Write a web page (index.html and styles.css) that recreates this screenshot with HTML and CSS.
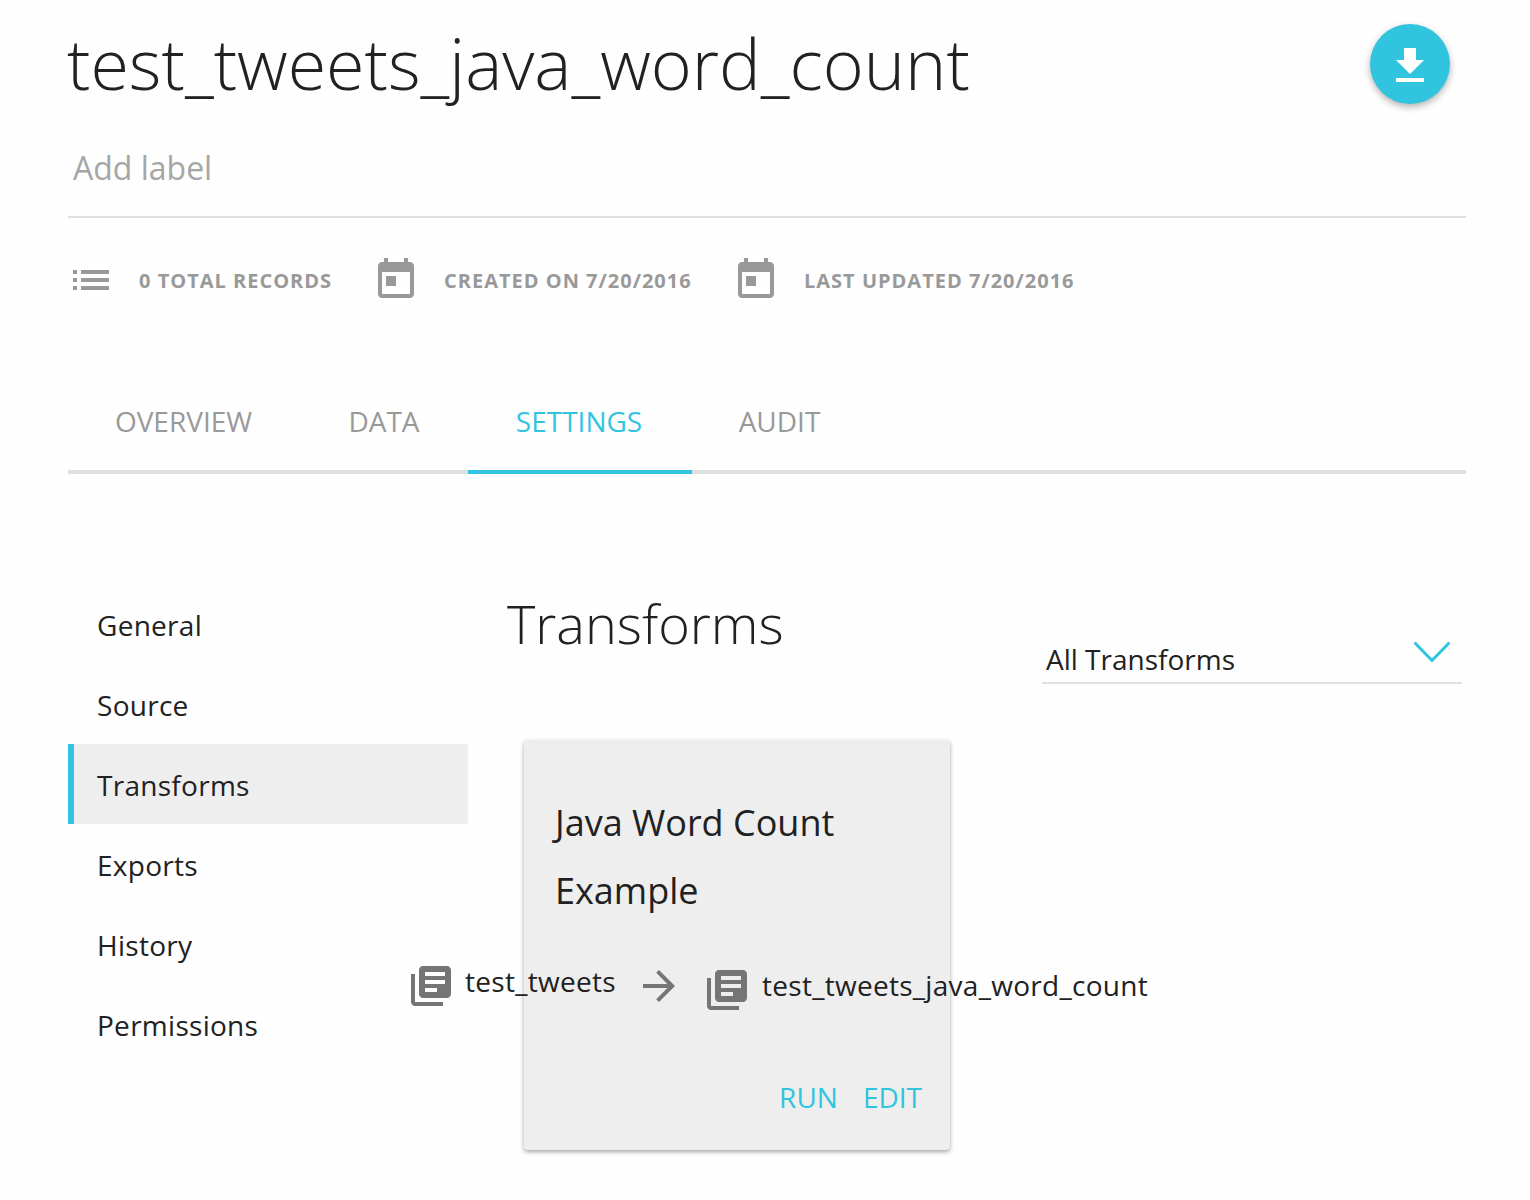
FILE: index.html
```html
<!DOCTYPE html>
<html lang="en">
<head>
<meta charset="utf-8">
<title>test_tweets_java_word_count</title>
<link rel="stylesheet" href="styles.css">
</head>
<body>
<main class="page">
  <header class="header">
    <h1 class="title"><span>test_tweets_java_word_count</span></h1>
    <button class="fab" aria-label="Download"><svg viewBox="0 0 24 24" width="48" height="48"><path d="M19 9h-4V3H9v6H5l7 7 7-7zM5 18v2h14v-2H5z"/></svg></button>
  </header>
  <div class="labels"><span>Add label</span></div>
  <div class="meta">
    <svg class="list-icon" viewBox="0 0 24 24" width="48" height="48"><path d="M3 13h2v-2H3v2zm0 4h2v-2H3v2zm0-8h2V7H3v2zm4 4h14v-2H7v2zm0 4h14v-2H7v2zM7 7v2h14V7H7z"/></svg>
    <span class="records">0 TOTAL RECORDS</span>
    <svg class="date-icon" viewBox="0 0 24 24" width="48" height="48"><path d="M19 3h-1V1h-2v2H8V1H6v2H5c-1.11 0-2 .9-2 2v14c0 1.1.89 2 2 2h14c1.1 0 2-.9 2-2V5c0-1.1-.9-2-2-2zm0 16H5V8h14v11zM7 10h5v5H7z"/></svg>
    <span class="created">CREATED ON 7/20/2016</span>
    <svg class="date-icon" viewBox="0 0 24 24" width="48" height="48"><path d="M19 3h-1V1h-2v2H8V1H6v2H5c-1.11 0-2 .9-2 2v14c0 1.1.89 2 2 2h14c1.1 0 2-.9 2-2V5c0-1.1-.9-2-2-2zm0 16H5V8h14v11zM7 10h5v5H7z"/></svg>
    <span class="updated">LAST UPDATED 7/20/2016</span>
  </div>
  <nav class="tabs">
    <a class="tab overview"><span>OVERVIEW</span></a>
    <a class="tab data"><span>DATA</span></a>
    <a class="tab settings active"><span>SETTINGS</span></a>
    <a class="tab audit"><span>AUDIT</span></a>
  </nav>
  <div class="content">
    <nav class="side">
      <a class="item">General</a>
      <a class="item">Source</a>
      <a class="item selected">Transforms</a>
      <a class="item">Exports</a>
      <a class="item">History</a>
      <a class="item">Permissions</a>
    </nav>
    <section class="main">
      <div class="bar">
        <h2 class="heading"><span>Transforms</span></h2>
        <div class="select"><span>All Transforms</span><svg viewBox="0 0 36 20" width="36" height="20"><path d="M1.500 1.500L18 18.500L34.500 1.500"/></svg></div>
      </div>
      <article class="card">
        <h3 class="card-title">Java Word Count<br>Example</h3>
        <div class="flow">
          <svg class="lib" viewBox="0 0 24 24" width="48" height="48"><path d="M4 6H2v14c0 1.100.9 2 2 2h14v-2H4V6zm16-4H8c-1.100 0-2 .9-2 2v12c0 1.100.9 2 2 2h12c1.100 0 2-.9 2-2V4c0-1.100-.9-2-2-2zm-1 9H9V9h10v2zm-4 4H9v-2h6v2zm4-8H9V5h10v2z"/></svg>
          <span class="from">test_tweets</span>
          <svg class="arrow" viewBox="0 0 24 24" width="48" height="48"><path d="M12 4l-1.410 1.410L16.170 11H4v2h12.170l-5.580 5.590L12 20l8-8z"/></svg>
          <svg class="lib lower" viewBox="0 0 24 24" width="48" height="48"><path d="M4 6H2v14c0 1.100.9 2 2 2h14v-2H4V6zm16-4H8c-1.100 0-2 .9-2 2v12c0 1.100.9 2 2 2h12c1.100 0 2-.9 2-2V4c0-1.100-.9-2-2-2zm-1 9H9V9h10v2zm-4 4H9v-2h6v2zm4-8H9V5h10v2z"/></svg>
          <span class="to">test_tweets_java_word_count</span>
        </div>
        <div class="actions"><a class="run">RUN</a><a class="edit">EDIT</a></div>
      </article>
    </section>
  </div>
</main>
</body>
</html>
```
FILE: styles.css
```css
* { box-sizing: border-box; }
body { margin: 0; background: #fefefe; color: #212121; font-family: "Open Sans", sans-serif; font-size: 28px; white-space: nowrap; }
svg { display: block; flex: none; fill: currentColor; }
h1, h2, h3 { margin: 0; font-weight: 300; }
.page { width: 1530px; height: 1200px; padding: 24px 64px 0 68px; overflow: hidden; }
.header { display: flex; justify-content: space-between; height: 108px; padding-right: 16px; }
.title { margin-left: -1px; font-size: 70px; line-height: 79px; }
.fab { display: flex; align-items: center; justify-content: center; width: 80px; height: 80px; padding: 4px 0 0; border: 0; border-radius: 50%; background: #31c4de; color: #fff; box-shadow: 0 3px 7px rgba(0,0,0,.3); }
.labels { height: 86px; padding-left: 5px; border-bottom: 2px solid #e0e0e0; color: #a6a6a6; font-size: 32px; line-height: 72px; }
.meta { display: flex; align-items: center; height: 124px; color: #999; font-size: 20px; font-weight: 700; letter-spacing: 1px; }
.list-icon { margin-left: -1px; }
.records { width: 233px; margin-left: 24px; }
.date-icon { margin-right: 24px; }
.created { width: 288px; }
.tabs { display: flex; height: 132px; padding-top: 28px; border-bottom: 4px solid #e0e0e0; color: #999; }
.tab { height: 104px; padding-top: 32px; text-align: center; line-height: 38px; }
.overview { width: 231px; }
.data { width: 169px; padding-left: 1px; }
.settings { width: 224px; padding-right: 2px; }
.audit { width: 175px; }
.active { color: #31c4de; border-bottom: 4px solid #31c4de; }
.content { display: flex; padding-top: 110px; }
.side { width: 400px; flex: none; }
.item { display: block; height: 80px; padding-left: 29px; line-height: 82px; letter-spacing: .28px; }
.selected { border-left: 6px solid #31c4de; background: #eee; padding-left: 23px; }
.main { width: 998px; }
.bar { display: flex; justify-content: space-between; height: 156px; padding: 0 4px 0 39px; }
.heading { font-size: 54px; line-height: 79px; }
.select { display: flex; justify-content: space-between; width: 420px; height: 100px; padding: 56px 12px 0 4px; border-bottom: 2px solid #e0e0e0; line-height: 38px; }
.select svg { margin-top: 2px; fill: none; stroke: #31c4de; stroke-width: 3; stroke-linecap: round; stroke-linejoin: round; }
.card { width: 426px; height: 410px; margin-left: 56px; padding: 49px 28px 0 31px; border-radius: 4px; background: #eee; box-shadow: 0 2px 4px rgba(0,0,0,.35); }
.card-title { font-size: 36px; font-weight: 400; line-height: 68px; }
.flow { display: flex; height: 48px; margin: 37px 0 0 -148px; line-height: 38px; letter-spacing: .28px; }
.flow svg { color: #757575; }
.from { width: 170px; margin-left: 10px; flex: none; }
.lower { margin: 4px 0 0 20px; }
.to { padding: 4px 0 0 11px; }
.actions { display: flex; justify-content: flex-end; gap: 25px; margin-top: 68px; color: #31c4de; line-height: 38px; }
```
